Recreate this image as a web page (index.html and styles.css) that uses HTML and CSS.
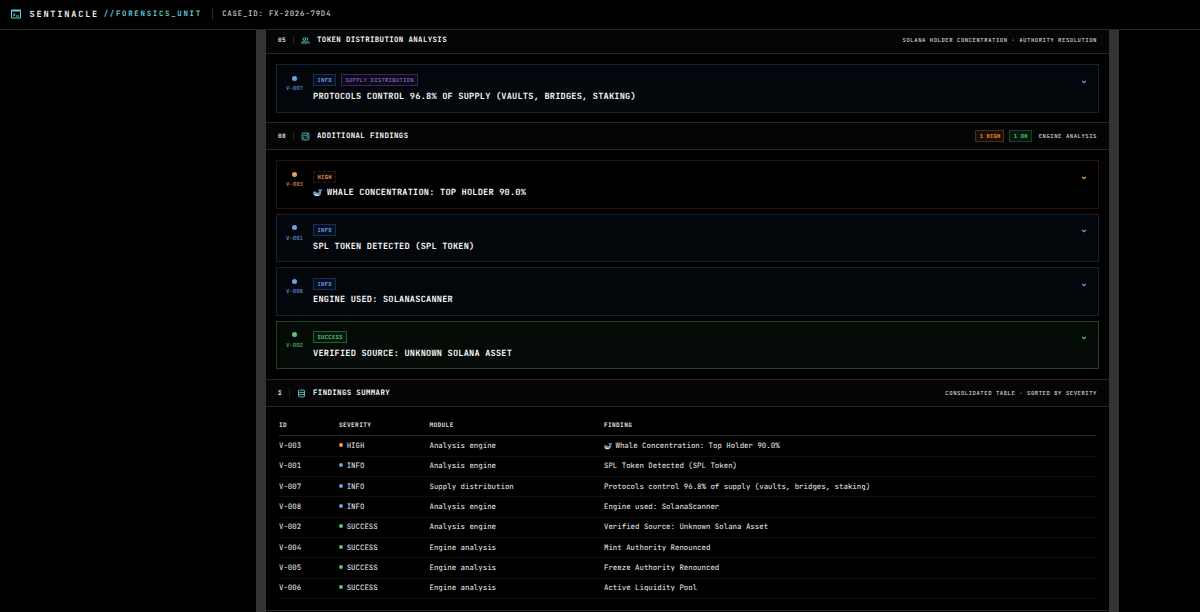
FILE: index.html
```html
<!DOCTYPE html>
<html lang="en">

<head>
    <meta charset="UTF-8">
    <meta name="viewport" content="width=device-width, initial-scale=1.0">
    <title>Sentinacle - Forensics Unit</title>
    <link rel="stylesheet" href="styles.css">
</head>

<body>
    <!-- shared icons -->
    <svg class="sprite" width="0" height="0">
        <symbol id="whale" viewBox="0 0 20 20">
            <path d="M0 9c3-2 7-1 9 1 2 1 4 1 5-2 0-2-2-3-3-5 2-1 4 0 5 1 1-1 2-2 4-2 0 2-1 4-2 5 1 6-2 11-8 11C4 18 0 14 0 9z" fill="#7894aa"/>
            <path d="M1 13c3 1 6 2 9 2 2 0 4 0 5-1-2 3-4 4-7 4-4 0-6-2-7-5z" fill="#dce6ee"/>
            <circle cx="5" cy="11.500" r="0.900" fill="#111"/>
        </symbol>
        <symbol id="chevron" viewBox="0 0 8 8">
            <path d="M1.500 2.500L4 5l2.500-2.500" fill="none" stroke="currentColor" stroke-width="1.500"/>
        </symbol>
    </svg>

    <header class="topbar">
        <svg class="logo" viewBox="0 0 24 24">
            <path fill="currentColor" fill-rule="evenodd" d="M4 3h16a2 2 0 0 1 2 2v14a2 2 0 0 1-2 2H4a2 2 0 0 1-2-2V5a2 2 0 0 1 2-2zm0 4v12h16V7zm3.500 10L6 15.600 8.200 13.500 6 11.400 7.500 10l3.500 3.500zM12 15h6v2h-6z"/>
        </svg>
        <span class="brand">SENTINACLE</span>
        <span class="unit">//FORENSICS_UNIT</span>
        <span class="case">CASE_ID: FX-2026-79D4</span>
    </header>

    <main class="report">
        <section>
            <div class="section-head first">
                <span class="num">05</span>
                <svg class="icon" viewBox="0 0 24 24" fill="none" stroke="currentColor" stroke-width="2.500">
                    <circle cx="9" cy="8" r="3.500"/>
                    <path d="M2 19v-1c0-3 4-4 7-4s7 1 7 4v1zM14.500 4.500a3.500 3.500 0 0 1 0 7M17 14c3 .5 5 1.500 5 4v1h-3"/>
                </svg>
                <h2>TOKEN DISTRIBUTION ANALYSIS</h2>
                <span class="note">SOLANA HOLDER CONCENTRATION · AUTHORITY RESOLUTION</span>
            </div>
            <div class="cards">
                <div class="card info">
                    <div class="mark"><i></i><span>V-007</span></div>
                    <div class="body">
                        <div class="tags"><span class="tag">INFO</span><span class="tag supply">SUPPLY DISTRIBUTION</span></div>
                        <h3>PROTOCOLS CONTROL 96.8% OF SUPPLY (VAULTS, BRIDGES, STAKING)</h3>
                    </div>
                    <svg class="chevron"><use href="#chevron"/></svg>
                </div>
            </div>
        </section>

        <section>
            <div class="section-head">
                <span class="num">08</span>
                <svg class="icon" viewBox="0 0 24 24" fill="none" stroke="currentColor" stroke-width="2.500">
                    <rect x="3" y="3" width="18" height="18" rx="2"/>
                    <path d="M7 17v-4M11 17v-2M16 17V9M6 10l4-2 3 2 5-4"/>
                </svg>
                <h2>ADDITIONAL FINDINGS</h2>
                <div class="counts">
                    <span class="count orange">1 HIGH</span>
                    <span class="count green">1 OK</span>
                </div>
                <span class="note">ENGINE ANALYSIS</span>
            </div>
            <div class="cards">
                <div class="card high">
                    <div class="mark"><i></i><span>V-003</span></div>
                    <div class="body">
                        <div class="tags"><span class="tag">HIGH</span></div>
                        <h3><svg class="whale"><use href="#whale"/></svg>WHALE CONCENTRATION: TOP HOLDER 90.0%</h3>
                    </div>
                    <svg class="chevron"><use href="#chevron"/></svg>
                </div>
                <div class="card info">
                    <div class="mark"><i></i><span>V-001</span></div>
                    <div class="body">
                        <div class="tags"><span class="tag">INFO</span></div>
                        <h3>SPL TOKEN DETECTED (SPL TOKEN)</h3>
                    </div>
                    <svg class="chevron"><use href="#chevron"/></svg>
                </div>
                <div class="card info">
                    <div class="mark"><i></i><span>V-008</span></div>
                    <div class="body">
                        <div class="tags"><span class="tag">INFO</span></div>
                        <h3>ENGINE USED: SOLANASCANNER</h3>
                    </div>
                    <svg class="chevron"><use href="#chevron"/></svg>
                </div>
                <div class="card success">
                    <div class="mark"><i></i><span>V-002</span></div>
                    <div class="body">
                        <div class="tags"><span class="tag">SUCCESS</span></div>
                        <h3>VERIFIED SOURCE: UNKNOWN SOLANA ASSET</h3>
                    </div>
                    <svg class="chevron"><use href="#chevron"/></svg>
                </div>
            </div>
        </section>

        <section class="summary">
            <div class="section-head">
                <span class="num">Σ</span>
                <svg class="icon" viewBox="0 0 24 24" fill="none" stroke="currentColor" stroke-width="2.500">
                    <rect x="4" y="3" width="16" height="18" rx="2"/>
                    <path d="M4 9h16M4 15h16"/>
                </svg>
                <h2>FINDINGS SUMMARY</h2>
                <span class="note">CONSOLIDATED TABLE · SORTED BY SEVERITY</span>
            </div>
            <table>
                <thead>
                    <tr><th class="c-id">ID</th><th class="c-sev">SEVERITY</th><th class="c-mod">MODULE</th><th>FINDING</th></tr>
                </thead>
                <tbody>
                    <tr><td>V-003</td><td><i class="dot high"></i>HIGH</td><td>Analysis engine</td><td><svg class="whale"><use href="#whale"/></svg>Whale Concentration: Top Holder 90.0%</td></tr>
                    <tr><td>V-001</td><td><i class="dot info"></i>INFO</td><td>Analysis engine</td><td>SPL Token Detected (SPL Token)</td></tr>
                    <tr><td>V-007</td><td><i class="dot info"></i>INFO</td><td>Supply distribution</td><td>Protocols control 96.8% of supply (vaults, bridges, staking)</td></tr>
                    <tr><td>V-008</td><td><i class="dot info"></i>INFO</td><td>Analysis engine</td><td>Engine used: SolanaScanner</td></tr>
                    <tr><td>V-002</td><td><i class="dot success"></i>SUCCESS</td><td>Analysis engine</td><td>Verified Source: Unknown Solana Asset</td></tr>
                    <tr><td>V-004</td><td><i class="dot success"></i>SUCCESS</td><td>Engine analysis</td><td>Mint Authority Renounced</td></tr>
                    <tr><td>V-005</td><td><i class="dot success"></i>SUCCESS</td><td>Engine analysis</td><td>Freeze Authority Renounced</td></tr>
                    <tr><td>V-006</td><td><i class="dot success"></i>SUCCESS</td><td>Engine analysis</td><td>Active Liquidity Pool</td></tr>
                </tbody>
            </table>
        </section>
        <div class="next-section"></div>
    </main>
</body>

</html>
```
FILE: styles.css
```css
* {
    box-sizing: border-box;
}

body {
    margin: 0;
    height: 612px;
    overflow: hidden;
    display: flex;
    flex-direction: column;
    background: #000;
    color: #e6e6e6;
    font-family: 'JetBrains Mono', 'DejaVu Sans Mono', monospace;
    text-rendering: geometricPrecision;
}

.sprite {
    display: none;
}

h2, h3 {
    margin: 0;
    color: #fafafa;
    font-weight: bold;
    white-space: nowrap;
}

/* top bar */
.topbar {
    height: 30px;
    flex: none;
    display: flex;
    align-items: center;
    padding: 0 0 1px 10px;
    border-bottom: 1px solid #262626;
    white-space: nowrap;
}

.logo {
    width: 12px;
    height: 12px;
    margin-right: 7.5px;
    color: #5fd3dc;
}

.brand {
    width: 74.2px;
    font-size: 8.6px;
    font-weight: bold;
    letter-spacing: 1.8px;
    color: #f0f0f0;
}

.unit {
    font-size: 7.4px;
    font-weight: bold;
    letter-spacing: 1.7px;
    color: #62cdd6;
}

.case {
    margin-left: 9.8px;
    padding: 1px 0 1px 9.5px;
    border-left: 1px solid #262626;
    font-size: 7.4px;
    letter-spacing: 0.76px;
    color: #e4e4e4;
}

/* report column */
.report {
    width: 863px;
    flex: 1;
    min-height: 0;
    margin-left: 256px;
    overflow: hidden;
    border: solid #333;
    border-width: 0 10px;
}

.section-head {
    height: 28px;
    display: flex;
    align-items: center;
    padding: 0 12px;
    background: #050505;
    border-top: 1px solid #262626;
    border-bottom: 1px solid #262626;
}

.section-head.first {
    margin-top: -4px;
}

.num {
    padding-right: 6.8px;
    border-right: 1px solid #262626;
    font-size: 6.1px;
    font-weight: bold;
    letter-spacing: 0.35px;
    color: #e8e8e8;
}

.icon {
    width: 9px;
    height: 9px;
    margin: 0 7px 0 7.2px;
    color: #55bfc8;
}

.section-head h2 {
    font-size: 7.4px;
    letter-spacing: 0.38px;
}

.note {
    margin-left: auto;
    font-size: 5.55px;
    letter-spacing: 0.56px;
    color: #ececec;
}

.counts {
    display: flex;
    gap: 5px;
    margin-left: auto;
}

.counts + .note {
    margin-left: 7px;
}

.count {
    height: 12px;
    padding: 0 3px 0 3.5px;
    border: 1px solid;
    font-size: 5.5px;
    line-height: 10.5px;
    letter-spacing: 0.15px;
    font-weight: bold;
}

.count.orange {
    color: #f0994e;
    background: #1c0f04;
    border-color: #4a2c12;
}

.count.green {
    color: #5fc983;
    background: #04190c;
    border-color: #17402a;
}

/* finding cards */
.cards {
    display: flex;
    flex-direction: column;
    gap: 5px;
    padding: 10px 10px 9.8px;
}

.card {
    height: 48.5px;
    display: flex;
    padding: 9.4px 10px 0 8.5px;
    border: 1px solid;
}

section:first-child .cards {
    padding-bottom: 9.8px;
}

.card.info {
    color: #6f9fee;
    background: #03060b;
    border-color: #152136;
}

.card.high {
    color: #ef9a55;
    background: #000;
    border-color: #281210;
}

.card.success {
    color: #58c677;
    background: #040a06;
    border-color: #1f4229;
}

.mark {
    width: 18px;
    display: flex;
    flex-direction: column;
    align-items: center;
    font-size: 5.6px;
}

.mark i {
    width: 5px;
    height: 5px;
    margin: 1.2px 0 4.5px;
    border-radius: 50%;
    background: currentColor;
}

.mark span {
    line-height: 7px;
    font-weight: bold;
    opacity: 0.8;
}

.body {
    margin-left: 9.5px;
}

.tags {
    display: flex;
    gap: 5px;
}

.tag {
    height: 12px;
    padding: 0 3px 0 3.5px;
    border: 1px solid #1a2f50;
    background: #06101f;
    font-size: 5.5px;
    line-height: 10.5px;
    letter-spacing: 0.3px;
    font-weight: bold;
}

.tag.supply {
    color: #9a80d4;
    background: #0e0a1c;
    border-color: #38295c;
    font-weight: normal;
}

.high .tag {
    background: #060302;
    border: 1px dashed #341711;
}

.success .tag {
    background: #06190c;
    border-color: #245a35;
}

.card h3 {
    margin-top: 3.5px;
    font-size: 8.6px;
    line-height: 12px;
    letter-spacing: 0.225px;
}

.whale {
    width: 9px;
    height: 9px;
    margin-right: 5px;
    vertical-align: -1.5px;
}

.chevron {
    width: 6px;
    height: 6px;
    margin: 4.2px 1px 0 auto;
}

/* summary table */
.summary table {
    width: 817px;
    margin: 8.3px 0 0 13px;
    border-collapse: separate;
    border-spacing: 0;
    table-layout: fixed;
}

th, td {
    padding: 0;
    text-align: left;
    white-space: nowrap;
}

th {
    height: 21px;
    border-bottom: 1px solid #2c2c2c;
    font-size: 6.1px;
    letter-spacing: 0.37px;
}

td {
    height: 20.35px;
    border-bottom: 1px solid #0f0f0f;
    font-size: 7.4px;
    color: #f0f0f0;
}

.c-id {
    width: 60px;
}

.c-sev {
    width: 90.5px;
}

.c-mod {
    width: 174.5px;
}

.dot {
    display: inline-block;
    width: 4px;
    height: 4px;
    margin-right: 3.7px;
    border-radius: 50%;
    vertical-align: 1px;
}

.dot.high {
    background: #ef9a55;
}

.dot.info {
    background: #6f9df0;
}

.dot.success {
    background: #58c677;
}

td .whale {
    width: 8px;
    height: 8px;
    margin-right: 3.5px;
}

.next-section {
    margin-top: 11.2px;
    height: 20px;
    background: #050505;
    border-top: 1px solid #262626;
}
```
